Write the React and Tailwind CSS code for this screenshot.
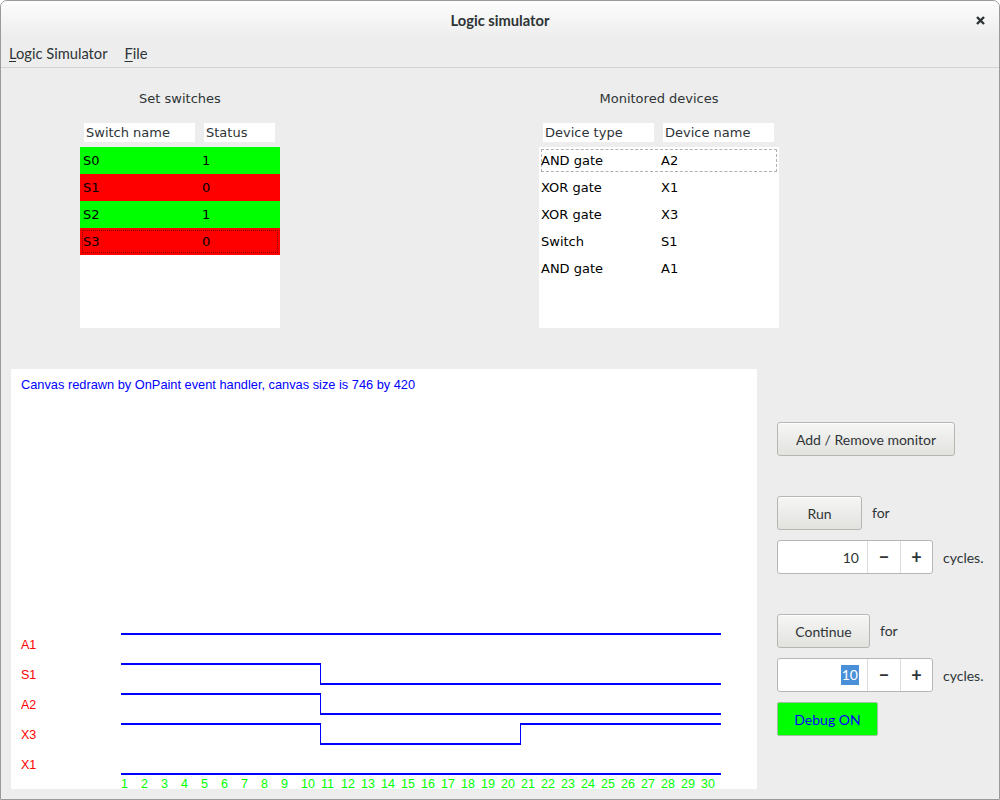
import React from "react";

const switches = [
  { name: "S0", value: 1 },
  { name: "S1", value: 0 },
  { name: "S2", value: 1 },
  { name: "S3", value: 0 },
];

const monitors = [
  { type: "AND gate", name: "A2" },
  { type: "XOR gate", name: "X1" },
  { type: "XOR gate", name: "X3" },
  { type: "Switch", name: "S1" },
  { type: "AND gate", name: "A1" },
];

// signal traces, y values relative to the canvas
const traces = [
  { label: "A1", labelY: 280, points: "110,265 710,265" },
  { label: "S1", labelY: 310, points: "110,295 309.5,295 309.5,315 710,315" },
  { label: "A2", labelY: 340, points: "110,325 309.5,325 309.5,345 710,345" },
  { label: "X3", labelY: 370, points: "110,355 309.5,355 309.5,375 509.5,375 509.5,355 710,355" },
  { label: "X1", labelY: 400, points: "110,405 710,405" },
];

const Button = ({ children, className = "" }) => (
  <button
    className={`h-[34px] rounded-[3px] border border-[#b6b6b3] bg-gradient-to-b from-[#f6f6f5] to-[#e2e2df] text-[14px] text-[#2e3436] shadow-[inset_0_1px_0_#ffffff] ${className}`}
  >
    {children}
  </button>
);

const SpinControl = ({ selected }) => (
  <div className="flex h-[34px] w-[156px] rounded-[3px] border border-[#b6b6b3] bg-white text-[14px] text-[#2e3436]">
    <div className="flex w-[89px] items-center justify-end pr-[8px]">
      {selected ? (
        <span className="bg-[#4a90d9] px-[1px] leading-[20px] text-white">10</span>
      ) : (
        <span>10</span>
      )}
    </div>
    <div className="flex w-[33px] items-center justify-center border-l border-[#dcdcda] text-[18px] font-bold">
      −
    </div>
    <div className="flex flex-1 items-center justify-center border-l border-[#dcdcda] text-[18px] font-bold">
      +
    </div>
  </div>
);

const App = () => {
  return (
    <div className="h-[800px] w-[1000px] overflow-hidden rounded-t-[7px] border border-[#9a9a9a] bg-[#ededed] font-['Lato',sans-serif] text-[#2e3436]">
      {/* title bar */}
      <div className="relative flex h-[37px] items-center justify-center bg-gradient-to-b from-[#fdfdfd] to-[#ededed]">
        <span className="pt-[2px] text-[14.7px] font-bold">Logic simulator</span>
        <svg className="absolute right-[14px] top-[15px]" width="9" height="9" viewBox="0 0 9 9">
          <path d="M1 1 L8 8 M8 1 L1 8" stroke="#2e3436" strokeWidth="2.4" />
        </svg>
      </div>

      {/* menu bar */}
      <div className="flex h-[30px] items-center gap-[17px] border-b border-[#d2d2d0] pl-[8px] pt-[1px] text-[14.7px]">
        <span>
          <span className="underline underline-offset-2">L</span>ogic Simulator
        </span>
        <span>
          <span className="underline underline-offset-2">F</span>ile
        </span>
      </div>

      {/* top lists */}
      <div className="flex font-['DejaVu_Sans',sans-serif] text-[13px]">
        <div className="ml-[79px] w-[200px]">
          <div className="mt-[20px] h-[22px] text-center leading-[22px] text-[#2e3436]">Set switches</div>
          <div className="mt-[13px] flex h-[19px] text-[#2e3436]">
            <div className="ml-[4px] w-[111px] bg-white pl-[2px] leading-[19px]">Switch name</div>
            <div className="ml-[9px] w-[71px] bg-white pl-[2px] leading-[19px]">Status</div>
          </div>
          <div className="mt-[5px] h-[181px] bg-white text-black">
            {switches.map((s, i) => (
              <div
                key={s.name}
                className={`flex h-[27px] items-center ${s.value ? "bg-[#00ff00]" : "bg-[#ff0000]"}`}
              >
                <div
                  className={`mx-[2px] flex h-[23px] w-full items-center ${
                    i === 3 ? "border border-dotted border-[#8a0000]" : "border border-transparent"
                  }`}
                >
                  <span className="w-[119px]">{s.name}</span>
                  <span>{s.value}</span>
                </div>
              </div>
            ))}
          </div>
        </div>

        <div className="ml-[259px] w-[240px]">
          <div className="mt-[20px] h-[22px] text-center leading-[22px] text-[#2e3436]">Monitored devices</div>
          <div className="mt-[13px] flex h-[19px] text-[#2e3436]">
            <div className="ml-[4px] w-[111px] bg-white pl-[2px] leading-[19px]">Device type</div>
            <div className="ml-[9px] w-[111px] bg-white pl-[2px] leading-[19px]">Device name</div>
          </div>
          <div className="mt-[5px] h-[181px] bg-white text-black">
            {monitors.map((m, i) => (
              <div key={m.type + m.name} className="flex h-[27px] items-start pt-[2px]">
                <div
                  className={`mx-[2px] flex h-[23px] w-full items-center ${
                    i === 0 ? "border border-dashed border-[#b0b0b0]" : "border border-transparent"
                  }`}
                >
                  <span className="w-[120px] -ml-[1px]">{m.type}</span>
                  <span>{m.name}</span>
                </div>
              </div>
            ))}
          </div>
        </div>
      </div>

      {/* canvas + controls */}
      <div className="mt-[41px] flex">
        <div className="ml-[10px] h-[420px] w-[746px] bg-white">
          <svg
            className="overflow-visible"
            width="746"
            height="420"
            viewBox="0 0 746 420"
            shapeRendering="crispEdges"
          >
            <text x="10" y="20" fill="#0000ff" fontSize="12.8" fontFamily="Liberation Sans, Arial, sans-serif">
              Canvas redrawn by OnPaint event handler, canvas size is 746 by 420
            </text>
            {traces.map((t) => (
              <g key={t.label}>
                <text x="10" y={t.labelY} fill="#ff0000" fontSize="12.5" fontFamily="Liberation Sans, Arial, sans-serif">
                  {t.label}
                </text>
                <polyline points={t.points} fill="none" stroke="#0000ff" strokeWidth="1.3" />
              </g>
            ))}
            {Array.from({ length: 30 }, (_, i) => (
              <text
                key={i}
                x={110 + i * 20}
                y="419"
                fill="#00ff00"
                fontSize="12.5"
                fontFamily="Liberation Sans, Arial, sans-serif"
              >
                {i + 1}
              </text>
            ))}
          </svg>
        </div>

        <div className="ml-[20px] flex flex-col text-[14px]">
          <Button className="mt-[53px] w-[178px]">Add / Remove monitor</Button>

          <div className="mt-[40px] flex items-center">
            <Button className="w-[85px]">Run</Button>
            <span className="ml-[10px] -mt-[1px]">for</span>
          </div>
          <div className="mt-[10px] flex items-center">
            <SpinControl />
            <span className="ml-[10px]">cycles.</span>
          </div>

          <div className="mt-[40px] flex items-center">
            <Button className="w-[93px]">Continue</Button>
            <span className="ml-[10px] -mt-[1px]">for</span>
          </div>
          <div className="mt-[10px] flex items-center">
            <SpinControl selected />
            <span className="ml-[10px]">cycles.</span>
          </div>

          <button className="mt-[10px] h-[34px] w-[101px] rounded-[2px] border border-[#9fbf9f] bg-[#00ff00] text-[14px] text-[#0000ff]">
            Debug ON
          </button>
        </div>
      </div>
    </div>
  );
};

export default App;
